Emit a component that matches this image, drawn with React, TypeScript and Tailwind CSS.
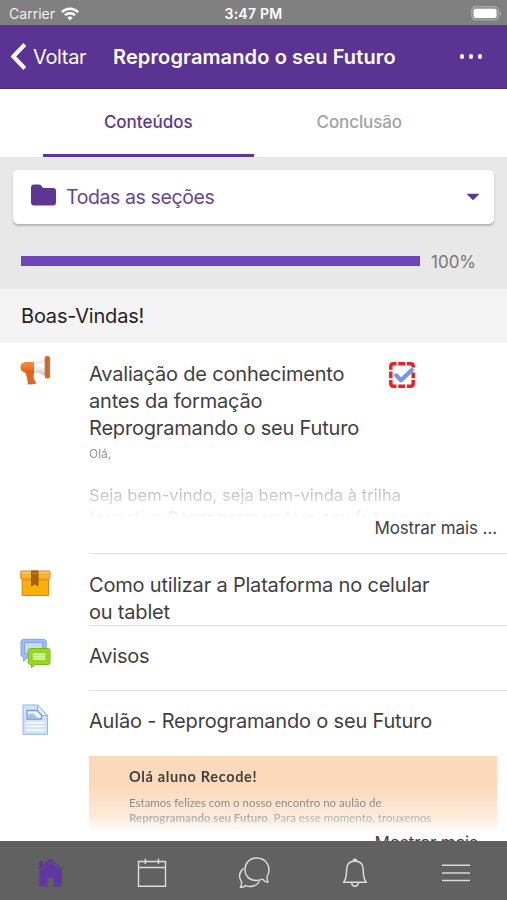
import React from "react";

interface CourseItem {
  id: string;
  icon: React.ReactNode;
  iconClass: string;
  lines: string[];
  rowClass: string;
}

function WifiIcon() {
  return (
    <svg width="18" height="14" viewBox="0 0 18 14" fill="none" stroke="#fff">
      <path d="M0.9 5.1C5.5 0.7 12.5 0.7 17.1 5.1" strokeWidth="2.5" />
      <path d="M3.9 8.2C6.8 5.5 11.2 5.5 14.1 8.2" strokeWidth="2.4" />
      <path d="M9 13.4L6.2 10.5C7.8 9.1 10.2 9.1 11.8 10.5Z" fill="#fff" stroke="none" />
    </svg>
  );
}

function BatteryIcon() {
  return (
    <svg width="31" height="15" viewBox="0 0 31 15">
      <rect x="0.7" y="0.7" width="26.8" height="13.2" rx="4" fill="#909090" stroke="#a8a8a8" strokeWidth="1.2" />
      <rect x="2.6" y="2.7" width="23" height="9.2" rx="2" fill="#fff" />
      <path d="M28.8 5.2C30.6 6 30.6 8.8 28.8 9.6Z" fill="#b4b4b4" />
    </svg>
  );
}

function MegaphoneIcon() {
  return (
    <svg width="32" height="32" viewBox="0 0 32 32">
      <defs>
        <linearGradient id="horn" x1="0" y1="0" x2="0" y2="1">
          <stop offset="0" stopColor="#f08a45" />
          <stop offset="0.5" stopColor="#f47a24" />
          <stop offset="1" stopColor="#d95f10" />
        </linearGradient>
        <linearGradient id="bell" x1="0" y1="0" x2="0" y2="1">
          <stop offset="0" stopColor="#d9d9d9" />
          <stop offset="0.4" stopColor="#ffffff" />
          <stop offset="1" stopColor="#b9b9b9" />
        </linearGradient>
      </defs>
      <path d="M5 16.5L14.5 17C12.8 20.5 13.5 25 16.2 27.5L15.3 29L7.8 29.5C8 25 6.5 21 5 16.5Z" fill="#e3661a" />
      <path d="M14.5 7H6C2.500 7 0.500 9.500 0.500 12.200C0.500 15 2.500 17.500 6 17.500H14.500Z" fill="url(#horn)" />
      <path d="M14 7C18.500 7 22 5.500 25.500 3.500V21.500C22 19 18.500 17.500 14 17.500Z" fill="url(#bell)" />
      <rect x="24.700" y="1" width="5.300" height="22.500" rx="2.200" fill="#e26a20" />
      <rect x="26.300" y="2.800" width="1.500" height="18.500" rx="0.700" fill="#bd6a30" />
    </svg>
  );
}

function BoxIcon() {
  return (
    <svg width="32" height="32" viewBox="0 0 32 32">
      <path d="M2.100 9H28.500V25.500H2.100Z" fill="#fcae0b" stroke="#dc8614" />
      <rect x="0.700" y="1" width="29.300" height="8" rx="0.800" fill="#fbb42c" stroke="#dc8f1c" />
      <path d="M1.700 2.500H29" stroke="#ffd074" />
      <path d="M3.100 10.200H27.500" stroke="#e39a10" />
      <path d="M11.500 1H18V16L14.800 13.800L11.500 16Z" fill="#a8610f" stroke="#8e4f0c" strokeWidth="0.800" />
      <path d="M12.200 3.300H17.500" stroke="#d39144" />
    </svg>
  );
}

function ForumIcon() {
  return (
    <svg width="32" height="32" viewBox="0 0 32 32">
      <path d="M3.500 1.300H23.500C25.300 1.300 26.200 2.500 26.200 4V16.500C26.200 18 25.300 19 23.500 19H8L3.700 23.500V19C2 19 1 18 1 16.500V4C1 2.500 2 1.300 3.500 1.300Z" fill="#9dbdf2" stroke="#7da5e6" />
      <rect x="4.500" y="4.500" width="18" height="11" fill="#c9dcfa" stroke="#7fa6e8" />
      <path d="M10.500 10.500H28C29.300 10.500 30 11.300 30 12.500V24.500C30 25.800 29.200 26.500 28 26.500H15.500L11.500 29.700V26.500H10.500C9 26.500 8.200 25.800 8.200 24.500V12.500C8.200 11.300 9.100 10.500 10.500 10.500Z" fill="#99d925" stroke="#78b817" />
      <rect x="12" y="14" width="14.500" height="9" fill="#b5ee4a" stroke="#87c71e" />
      <path d="M13.500 16.500H25M13.500 18.800H25M13.500 21H25" stroke="#e2f9b8" />
    </svg>
  );
}

function PageIcon() {
  return (
    <svg width="32" height="32" viewBox="0 0 32 32">
      <path d="M3 1H17.500L27.500 11.500V30.300H3Z" fill="#cfe3fc" stroke="#91b7ed" />
      <path d="M17.500 1V8L20.500 11.500H27.500Z" fill="#e6f1ff" stroke="#8fb4ea" />
      <path d="M7 6.500H17.200L21.500 11V15H7Z" fill="#f2f7fd" stroke="#719de0" strokeWidth="1.300" />
      <path d="M7.700 14.300V10.200L13 9.300L18 14.300Z" fill="#a9c2dd" />
      <path d="M6 18.700H24.500M6 22.400H24.500M6 26H24.500" stroke="#fff" strokeWidth="1.400" />
    </svg>
  );
}

function CompletionIcon() {
  return (
    <svg className="shrink-0" width="26" height="26" viewBox="0 0 26 26" fill="none">
      <path
        d="M1.800 7.800V4.500Q1.800 1.800 4.500 1.800H7.500M9.300 1.800H16.300M18 1.800H21.500Q24.200 1.800 24.200 4.500V5.500M24.200 18V21.500Q24.200 24.200 21.500 24.200H18M16.300 24.200H9.300M7.500 24.200H4.500Q1.800 24.200 1.800 21.500V18M1.800 16.300V9.500M24.200 10.500V16.300"
        stroke="#ef1f25"
        strokeWidth="3.500"
      />
      <path d="M7.300 13.500L12 18.200L22.800 8" stroke="#7399e5" strokeWidth="4.300" strokeLinecap="round" strokeLinejoin="round" />
    </svg>
  );
}

function FolderIcon() {
  return (
    <svg width="26" height="23" viewBox="0 0 26 23">
      <path d="M0 4Q0 0.600 3 0.600H8Q9.800 0.600 10.800 2.200L12 4H22Q25 4 25 7V18.500Q25 21.500 22 21.500H3Q0 21.500 0 18.500Z" fill="#5c3595" />
    </svg>
  );
}

function HomeIcon() {
  return (
    <svg width="26" height="30" viewBox="0 0 26 30">
      <path d="M1.200 9.500V3H5V6.500L12.500 0.800L24.700 10.700L23.800 12L12.500 3L1.500 12L0.800 10.800Z" fill="#5f37a0" />
      <path d="M1.300 13.200L12.500 4.200L23.900 13.200V28.500H15.700V20H9.400V28.500H1.300Z" fill="#5f37a0" />
    </svg>
  );
}

function CalendarIcon() {
  return (
    <svg width="30" height="30" viewBox="0 0 30 30" fill="none" stroke="#ddd" strokeWidth="1.4">
      <path d="M1.500 3.500H28.500V28.300H1.500ZM1.500 9.500H28.500M8.300 0.800V6M21.500 0.800V6" />
    </svg>
  );
}

function ChatIcon() {
  return (
    <svg width="34" height="32" viewBox="0 0 34 32" fill="none" stroke="#ddd" strokeWidth="1.4" strokeLinejoin="round">
      <path d="M19.500 1C12 1 8 6.500 8 12.500C8 19.500 13 23.500 19 23.500C21.500 23.500 23.500 23.100 25.500 22.200Q28 25.200 31 25.200Q29.800 22.800 30.100 19.500C35 10.500 29.500 1 19.500 1Z" />
      <path d="M6.700 11.500C2 14.500 1.400 20.300 4.500 24.500Q4.800 28 3.300 30.300Q6.300 30.400 8.500 28.600C14 30.800 19.500 29 22.500 24.300" />
    </svg>
  );
}

function BellIcon() {
  return (
    <svg width="26" height="30" viewBox="0 0 26 30" fill="none" stroke="#ddd" strokeWidth="1.5" strokeLinejoin="round">
      <path d="M10.800 3.300C6.200 4.200 4.600 8 4.600 12C4.600 18 4.200 21 1.500 24.300H24.300C21.600 21 21.200 18 21.200 12C21.200 8 19.600 4.200 15 3.300" />
      <path d="M10 3.500C11 2.900 14.800 2.900 15.800 3.500M11.300 3C11.300 0.800 14.500 0.800 14.500 3M9.700 24.500C9.700 29.400 16.200 29.400 16.200 24.500" />
    </svg>
  );
}

function MenuIcon() {
  return (
    <svg width="28" height="20" viewBox="0 0 28 20" stroke="#d8d8d8" strokeWidth="1.6">
      <path d="M0 2.200H28M0 10H28M0 17.500H28" />
    </svg>
  );
}

const shortItems: CourseItem[] = [
  {
    id: "plataforma",
    icon: <BoxIcon />,
    iconClass: "pt-[16px]",
    lines: ["Como utilizar a Plataforma no celular", "ou tablet"],
    rowClass: "h-[72px] pt-[18px]",
  },
  {
    id: "avisos",
    icon: <ForumIcon />,
    iconClass: "pt-[12px]",
    lines: ["Avisos"],
    rowClass: "h-[65px] pt-[17px]",
  },
];

function StatusBar() {
  return (
    <div className="grid h-[25px] grid-cols-3 items-center bg-[#808080] pt-[2px] text-sm text-white">
      <div className="flex items-center gap-[6px] pl-[9px]">
        <span className="text-[14px] tracking-[0.02px] text-[#f0f0f0]">Carrier</span>
        <WifiIcon />
      </div>
      <span className="pt-px text-center text-[14px] font-semibold tracking-[0.25px]">3:47 PM</span>
      <div className="flex justify-end pr-[5px]">
        <BatteryIcon />
      </div>
    </div>
  );
}

function NavBar() {
  return (
    <header className="flex h-[64px] items-center border-b border-[#4b2d7b] bg-[#5b3393] text-white">
      <button className="flex w-[113px] items-center gap-[6px] pl-[10px]">
        <svg width="17" height="27" viewBox="0 0 17 27" fill="none" stroke="#fff" strokeWidth="4">
          <path d="M14.800 1.500L3.300 13.500L14.800 25.500" />
        </svg>
        <span className="pt-px text-[20px] tracking-[-0.35px]">Voltar</span>
      </button>
      <h1 className="whitespace-nowrap text-[20px] font-semibold tracking-[0.12px]">Reprogramando o seu Futuro</h1>
      <button className="ml-auto flex gap-[4.500px] pr-[25px]">
        <i className="size-[4.500px] rounded-full bg-white" />
        <i className="size-[4.500px] rounded-full bg-white" />
        <i className="size-[4.500px] rounded-full bg-white" />
      </button>
    </header>
  );
}

function Tabs() {
  return (
    <nav className="flex h-[68px] bg-white px-[43px] text-[17px] font-medium">
      <button className="w-[211px] border-b-[3px] border-[#5c3795] pt-[2px] text-[#5c3795]">Conteúdos</button>
      <button className="w-[211px] border-b-[3px] border-transparent pt-[2px] pl-px text-[#a3a3a3] tracking-[-0.1px]">
        Conclusão
      </button>
    </nav>
  );
}

export default function App() {
  return (
    <div className="flex h-[900px] w-[507px] flex-col overflow-hidden bg-white font-['Inter',sans-serif] text-[#3f3f3f]">
      <StatusBar />
      <NavBar />
      <Tabs />

      {/* Section selector and progress */}
      <div className="h-[132px] shrink-0 bg-[#e8e8e8] px-[13px] pt-[13px]">
        <button className="flex h-[54px] w-full items-center rounded-[5px] bg-white pr-[14px] pl-[18px] text-[#6544a0] shadow-[0_2px_2px_rgba(0,0,0,0.22)]">
          <div className="pb-[4px]">
            <FolderIcon />
          </div>
          <span className="ml-[9px] pt-px text-[19.500px] tracking-[-0.4px]">Todas as seções</span>
          <svg className="ml-auto" width="14" height="8" viewBox="0 0 14 8">
            <path d="M0.500 0.700H13.500L7 7.200Z" fill="#5c3595" />
          </svg>
        </button>
        <div className="mt-[26px] flex items-center pl-[8px] leading-[24px]">
          <div className="mb-[2px] h-[10px] w-[399px] bg-[#7045b8]" />
          <span className="ml-[11px] text-[17px] text-[#777]">100%</span>
        </div>
      </div>

      <h2 className="flex h-[54px] shrink-0 items-center bg-[#f4f4f4] pl-[21px] text-[20px] tracking-[-0.2px] text-[#1f1f1f]">
        Boas-Vindas!
      </h2>

      <main className="min-h-0 flex-1 overflow-hidden">
        <section className="flex h-[211px] pt-[12px]">
          <div className="w-[89px] shrink-0 pl-[20px]">
            <MegaphoneIcon />
          </div>
          <div className="h-full flex-1 border-b border-[#e2e2e2] pt-[5px]">
            <div className="flex">
              <h3 className="w-[300px] pt-px text-[20px] leading-[27px] tracking-[-0.19px] whitespace-nowrap">
                Avaliação de conhecimento
                <br />
                antes da formação
                <br />
                Reprogramando o seu Futuro
              </h3>
              <div className="pt-[2px]">
                <CompletionIcon />
              </div>
            </div>
            <div className="h-[76px] overflow-hidden whitespace-nowrap text-[#777] [mask-image:linear-gradient(to_bottom,#000_0%,#000c_15%,#0008_60%,transparent_100%)]">
              <p className="mt-[4px] text-[12px] leading-[16px]">Olá,</p>
              <p className="mt-[22px] text-[16.500px] leading-[22px] tracking-[0.05px]">
                Seja bem-vindo, seja bem-vinda à trilha
                <br />
                formativa <b className="tracking-[0.35px]">Reprogramando o seu futuro.</b>
              </p>
            </div>
            <p className="pr-[10px] text-right text-[17px] leading-[20px] tracking-[-0.1px]">Mostrar mais ...</p>
          </div>
        </section>

        {shortItems.map((item) => (
          <section key={item.id} className="flex">
            <div className={`w-[89px] shrink-0 pl-[20px] ${item.iconClass}`}>{item.icon}</div>
            <div className={`flex-1 border-b border-[#e2e2e2] text-[20px] leading-[27px] tracking-[-0.19px] ${item.rowClass}`}>
              {item.lines.map((line) => (
                <p key={line} className="whitespace-nowrap">{line}</p>
              ))}
            </div>
          </section>
        ))}

        <section className="flex">
          <div className="w-[89px] shrink-0 pt-[13px] pl-[20px]">
            <PageIcon />
          </div>
          <div className="flex-1 pt-[17px]">
            <p className="text-[20px] leading-[27px] tracking-[-0.18px] whitespace-nowrap">
              Aulão - Reprogramando o seu Futuro
            </p>
            <div className="mt-[21px] mr-[10px] h-[77px] bg-[#fbd6b6] pt-[11px] pl-[40px] [mask-image:linear-gradient(to_bottom,#000e_0%,#000e_40%,#0007_80%,transparent_100%)]">
              <h4 className="font-['Lato'] text-[14.500px] leading-[20px] font-bold tracking-[0.650px] text-[#333]">
                Olá aluno Recode!
              </h4>
              <p className="mt-[8px] font-['Lato'] text-[11.500px] leading-[15px] whitespace-nowrap text-[#555]">
                Estamos felizes com o nosso encontro no aulão de
                <br />
                <b className="font-bold">Reprogramando seu Futuro</b>. Para esse momento, trouxemos
              </p>
            </div>
            <p className="pr-[29px] text-right text-[17px] leading-[20px] tracking-[-0.1px]">Mostrar mais</p>
          </div>
        </section>
      </main>

      <footer className="flex h-[59px] shrink-0 items-center bg-[#616161] pt-[4px] [&>div]:flex [&>div]:flex-1 [&>div]:justify-center">
        <div><HomeIcon /></div>
        <div><CalendarIcon /></div>
        <div><ChatIcon /></div>
        <div><BellIcon /></div>
        <div><MenuIcon /></div>
      </footer>
    </div>
  );
}
